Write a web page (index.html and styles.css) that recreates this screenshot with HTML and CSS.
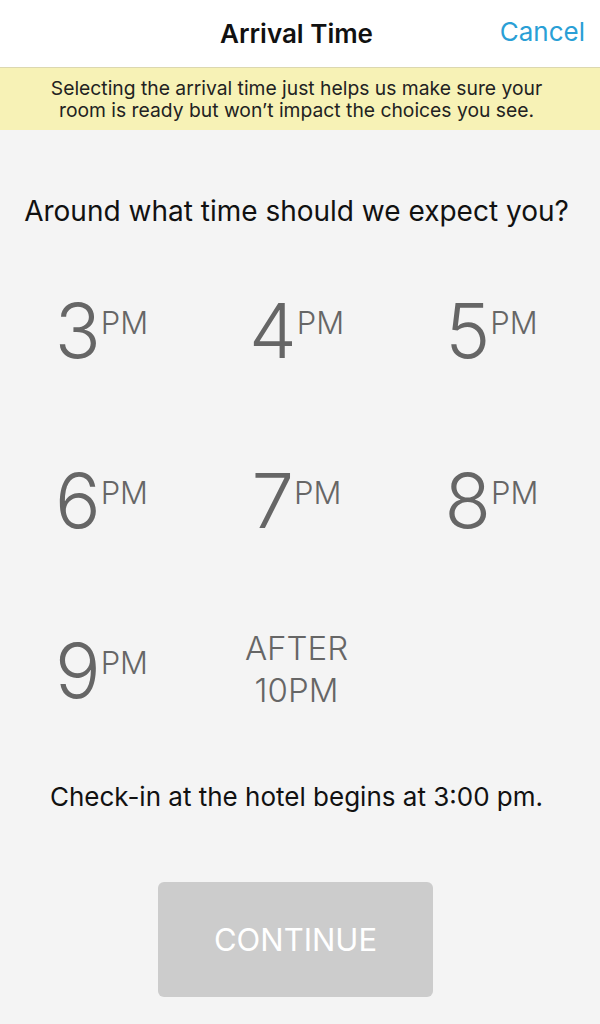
FILE: index.html
```html
<!DOCTYPE html>
<html>
	<head>
		<meta charset="utf-8"/>
		<title>Arrival Time</title>
		<link rel="stylesheet" href="styles.css">
	</head>
	<body>
		<main>
			<header class="topbar">
				<h1>Arrival Time</h1>
				<a class="cancel" href="#">Cancel</a>
			</header>
			<div class="notice">Selecting the arrival time just helps us make sure your room is ready but won’t impact the choices you see.</div>

			<p class="question">Around what time should we expect you?</p>

			<div class="times">
				<button type="button" class="time"><span class="hour">3</span><span class="ampm">PM</span></button>
				<button type="button" class="time"><span class="hour">4</span><span class="ampm">PM</span></button>
				<button type="button" class="time"><span class="hour">5</span><span class="ampm">PM</span></button>
				<button type="button" class="time"><span class="hour">6</span><span class="ampm">PM</span></button>
				<button type="button" class="time"><span class="hour">7</span><span class="ampm">PM</span></button>
				<button type="button" class="time"><span class="hour">8</span><span class="ampm">PM</span></button>
				<button type="button" class="time"><span class="hour">9</span><span class="ampm">PM</span></button>
				<button type="button" class="time late">AFTER<br>10PM</button>
			</div>

			<p class="checkin">Check-in at the hotel begins at 3:00 pm.</p>

			<div class="actions">
				<button type="button" class="continue" disabled>CONTINUE</button>
			</div>
		</main>
	</body>
</html>
```

FILE: styles.css
```css
body {
	margin: 0;
	background: #f4f4f4;
	font-family: Inter, "Liberation Sans", sans-serif;
	color: #111;
}
main {
	width: 593px;
	min-height: 1024px;
}
.topbar {
	height: 67px;
	background: #fff;
	position: relative;
	display: flex;
	align-items: center;
	justify-content: center;
	border-bottom: 1px solid #dcd8b0;
	margin-right: -7px;
	padding-right: 7px;
}
.topbar h1 {
	margin: 0;
	font-size: 26px;
	font-weight: 600;
	color: #111;
}
.cancel {
	position: absolute;
	right: 15px;
	top: 16px;
	font-size: 26px;
	color: #2a9fd6;
	text-decoration: none;
}
.notice {
	background: #f7f2b6;
	margin-right: -7px;
	padding: 9px 47px 9px 40px;
	text-align: center;
	font-size: 19.3px;
	line-height: 22px;
	color: #222;
}
.question {
	margin: 66px 0 0;
	text-align: center;
	font-size: 28px;
	line-height: 30px;
	color: #111;
}
.times {
	display: grid;
	grid-template-columns: repeat(3, 195px);
	grid-auto-rows: 170px;
	padding: 66px 0 0 4px;
}
.time {
	border: 0;
	background: transparent;
	padding: 0;
	color: #666;
	font-family: inherit;
	display: flex;
	justify-content: center;
	align-items: flex-start;
	height: 100px;
}
.hour {
	font-size: 76px;
	font-weight: 350;
	line-height: 76px;
}
.ampm {
	font-size: 31px;
	font-weight: 300;
	line-height: 31px;
	margin-top: 15px;
}
.late {
	font-size: 33px;
	font-weight: 300;
	line-height: 42px;
	margin-top: -13px;
	align-items: center;
	text-align: center;
}
.checkin {
	margin: -20px 0 0;
	text-align: center;
	font-size: 26px;
	line-height: 30px;
	color: #111;
}
.actions {
	display: flex;
	justify-content: center;
	padding-top: 70px;
}
.continue {
	width: 275px;
	height: 115px;
	margin-left: -2px;
	border: 0;
	border-radius: 6px;
	background: #cccccc;
	color: #fff;
	font-family: inherit;
	font-size: 31px;
}
```
